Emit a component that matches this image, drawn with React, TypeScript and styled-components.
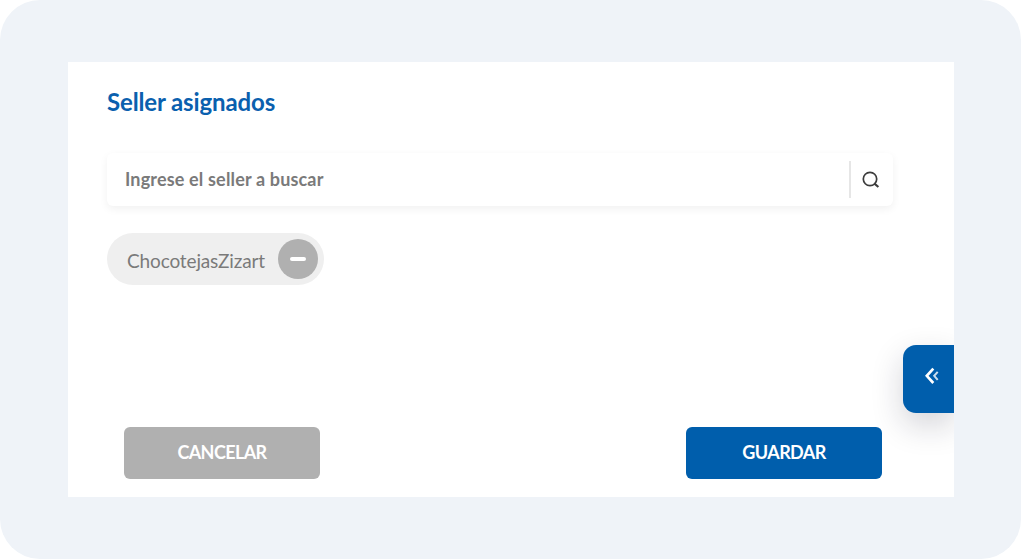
import { FunctionComponent, useState } from 'react';
import styled, { createGlobalStyle } from 'styled-components';

const GlobalStyle = createGlobalStyle`
  * {
    box-sizing: border-box;
  }
  body {
    margin: 0;
    background: #fff;
    font-family: Lato, 'Liberation Sans', sans-serif;
  }
`;

const App: FunctionComponent = () => {
  const [search, setSearch] = useState('');
  const [sellers, setSellers] = useState(['ChocotejasZizart']);

  const removeSeller = (name: string) => {
    setSellers(sellers.filter((seller) => seller !== name));
  };

  return (
    <Page>
      <GlobalStyle />
      <Panel>
        <Title>Seller asignados</Title>
        <SearchBar>
          <SearchInput
            placeholder="Ingrese el seller a buscar"
            value={search}
            onChange={(e) => setSearch(e.target.value)}
          />
          <SearchButton aria-label="Buscar">
            <svg width="18" height="18" viewBox="0 0 18 18" fill="none" stroke="#3c3c3c">
              <circle cx="8" cy="8" r="6.7" strokeWidth="1.7" />
              <path d="M12.2 12.4L16.4 16" strokeWidth="2.2" />
            </svg>
          </SearchButton>
        </SearchBar>
        <Chips>
          {sellers.map((seller) => (
            <Chip key={seller}>
              <ChipName>{seller}</ChipName>
              <RemoveButton aria-label="Quitar" onClick={() => removeSeller(seller)}>
                <Minus />
              </RemoveButton>
            </Chip>
          ))}
        </Chips>
        <Actions>
          <Button $color="#b0b0b0">CANCELAR</Button>
          <Button $color="#005eac">GUARDAR</Button>
        </Actions>
        <SideTab aria-label="Abrir menú">
          <svg width="14" height="18" viewBox="0 0 14 18" fill="none" stroke="#fff">
            <path d="M8.3 1.6L1.8 8.8L8.3 16" strokeWidth="2.7" />
            <path d="M12.7 4.8L9.2 8.8L12.7 12.8" strokeWidth="2" opacity="0.8" />
          </svg>
        </SideTab>
      </Panel>
    </Page>
  );
};

export default App;

const Page = styled.main`
  width: 1021px;
  height: 559px;
  padding: 62px 67px 62px 68px;
  border-radius: 40px;
  background: #eff3f8;
`;

const Panel = styled.section`
  position: relative;
  display: flex;
  flex-direction: column;
  height: 435px;
  padding: 25px 61px 18px 39px;
  overflow: hidden;
  background: #fff;
`;

const Title = styled.h1`
  margin: 0;
  font-size: 24px;
  line-height: 30px;
  font-weight: 700;
  letter-spacing: -0.13px;
  color: #0a60ae;
`;

const SearchBar = styled.div`
  display: flex;
  align-items: center;
  height: 53px;
  margin-top: 36px;
  border-radius: 6px;
  background: #fff;
  box-shadow: 0 3px 8px rgba(0, 0, 0, 0.06);
`;

const SearchInput = styled.input`
  flex: 1;
  min-width: 0;
  height: 100%;
  padding: 0 18px 2px;
  border: 0;
  outline: 0;
  background: none;
  font: 700 18px Lato, sans-serif;
  letter-spacing: 0.16px;
  color: #757575;

  &::placeholder {
    color: #7a7a7a;
    opacity: 1;
  }
`;

const SearchButton = styled.button`
  display: flex;
  align-items: center;
  justify-content: center;
  width: 44px;
  height: 37px;
  padding: 0 3px 0 0;
  border: 0;
  border-left: 2px solid #e6e6e6;
  background: none;
`;

const Chips = styled.div`
  display: flex;
  gap: 12px;
  margin-top: 27px;
`;

const Chip = styled.div`
  display: flex;
  align-items: center;
  justify-content: space-between;
  width: 217px;
  height: 52px;
  padding: 0 6px 0 20px;
  border-radius: 26px;
  background: #efefef;
`;

const ChipName = styled.span`
  padding-top: 3px;
  font-size: 19px;
  line-height: 24px;
  letter-spacing: -0.14px;
  color: #7a7a7a;
`;

const RemoveButton = styled.button`
  display: flex;
  align-items: center;
  justify-content: center;
  width: 40px;
  height: 40px;
  padding: 0;
  border: 0;
  border-radius: 50%;
  background: #b0b0b0;
`;

const Minus = styled.span`
  width: 16px;
  height: 4px;
  border-radius: 2px;
  background: #fff;
`;

const Actions = styled.div`
  display: flex;
  justify-content: space-between;
  margin-top: auto;
  padding: 0 11px 0 17px;
`;

const Button = styled.button<{ $color: string }>`
  width: 196px;
  height: 52px;
  padding: 0 0 2px;
  border: 0;
  border-radius: 6px;
  background: ${({ $color }) => $color};
  font: 700 18px Lato, sans-serif;
  letter-spacing: -0.6px;
  color: #fff;
`;

// stays pinned to the edge of the panel, above its content
const SideTab = styled.button`
  position: absolute;
  top: 283px;
  right: 0;
  display: flex;
  align-items: center;
  justify-content: center;
  width: 51px;
  height: 68px;
  padding: 0 0 6px 6px;
  border: 0;
  border-radius: 13px 0 0 13px;
  background: #005eac;
  box-shadow: 0 12px 32px rgba(20, 20, 50, 0.19);
`;
